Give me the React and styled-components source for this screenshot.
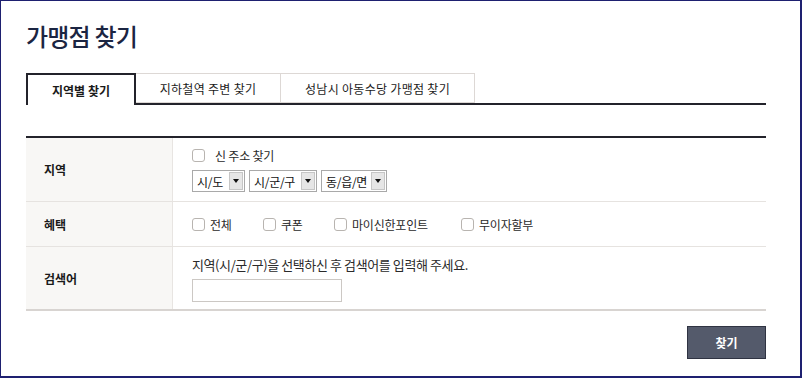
import styled, { createGlobalStyle } from 'styled-components';

const GlobalStyle = createGlobalStyle`
  html, body {
    margin: 0;
    padding: 0;
    background: #fff;
  }
  body {
    font-family: 'Noto Sans CJK KR', 'Noto Sans', sans-serif;
    color: #222;
  }
`;

const Frame = styled.div`
  box-sizing: border-box;
  width: 802px;
  height: 378px;
  border: 1px solid #1e2070;
  border-right-width: 2px;
  border-bottom-width: 2px;
  padding: 0 0 0 25px;
  overflow: hidden;
`;

const Inner = styled.div`
  width: 740px;
`;

const Title = styled.h1`
  margin: 0;
  padding-top: 19px;
  height: 72px;
  box-sizing: border-box;
  font-size: 24px;
  font-weight: 500;
  letter-spacing: -0.8px;
  color: #1b2542;
  line-height: 32px;
`;

const TabBar = styled.div`
  display: flex;
  height: 32px;
  border-bottom: 2px solid #23232b;
  box-sizing: border-box;
`;

const Tab = styled.div`
  box-sizing: border-box;
  height: ${(p) => (p.$active ? '32px' : '30px')};
  padding: 0 20px;
  width: ${(p) => p.$width}px;
  display: flex;
  align-items: center;
  justify-content: center;
  font-size: 12px;
  letter-spacing: ${(p) => (p.$active ? '0' : '0.3px')};
  font-weight: ${(p) => (p.$active ? 700 : 400)};
  color: #1a1a1a;
  background: #fff;
  border: ${(p) => (p.$active ? '2px solid #23232b' : '1px solid #ddd8d5')};
  border-bottom: ${(p) => (p.$active ? '0' : '1px solid #ddd8d5')};
  border-left: ${(p) => (p.$first || p.$active ? '' : '0')};
  margin-bottom: ${(p) => (p.$active ? '-2px' : '0')};
  position: relative;
`;

const Table = styled.div`
  margin-top: 31px;
  border-top: 2px solid #23232b;
  border-bottom: 2px solid #d8d4d1;
`;

const Row = styled.div`
  display: flex;
  height: ${(p) => p.$h}px;
  & + & {
    border-top: 1px solid #e6e3e0;
  }
`;

const Label = styled.div`
  width: 147px;
  flex: none;
  box-sizing: border-box;
  background: #f8f7f5;
  border-right: 1px solid #e8e5e2;
  padding-left: 18px;
  display: flex;
  align-items: center;
  font-size: 12px;
  font-weight: 700;
  color: #1a1a1a;
`;

const Cell = styled.div`
  flex: 1;
  padding-left: 19px;
  display: flex;
  flex-direction: column;
  justify-content: center;
  gap: ${(p) => p.$gap ?? 0}px;
  font-size: 12px;
  color: #333;
`;

const Line = styled.div`
  display: flex;
  align-items: center;
  gap: ${(p) => p.$gap ?? 4}px;
`;

const CheckLabel = styled.label`
  display: flex;
  align-items: center;
  gap: ${(p) => p.$gap ?? 5}px;
  width: ${(p) => (p.$width ? `${p.$width}px` : 'auto')};
  font-size: 12px;
  color: #2a2a2a;
  letter-spacing: -0.2px;
`;

const Box = styled.span`
  display: inline-block;
  width: 11px;
  height: 11px;
  border: 1px solid #b8b4b0;
  border-radius: 3px;
  background: #fff;
`;

const Select = styled.div`
  box-sizing: border-box;
  height: 22px;
  width: ${(p) => p.$width}px;
  border: 1px solid #a9a9a9;
  display: flex;
  align-items: stretch;
  font-size: 12px;
  color: #111;
`;

const SelectText = styled.span`
  flex: 1;
  display: flex;
  align-items: center;
  padding-left: 4px;
  letter-spacing: -0.3px;
`;

const Arrow = styled.span`
  width: 14px;
  margin: 1px;
  background: #e6e6e6;
  border: 1px solid #c6c6c6;
  box-sizing: border-box;
  display: flex;
  align-items: center;
  justify-content: center;
  &::after {
    content: '';
    border-left: 3px solid transparent;
    border-right: 3px solid transparent;
    border-top: 4px solid #111;
  }
`;

const Guide = styled.div`
  font-size: 13px;
  color: #2a2a2a;
  letter-spacing: -0.4px;
`;

const Input = styled.div`
  box-sizing: border-box;
  width: 150px;
  height: 23px;
  border: 1px solid #ccc8c4;
  background: #fff;
`;

const Footer = styled.div`
  display: flex;
  justify-content: flex-end;
  padding-top: 15px;
`;

const Button = styled.button`
  width: 79px;
  height: 33px;
  background: #545a6b;
  border: 1px solid #2f3342;
  color: #fff;
  font-family: inherit;
  font-size: 12px;
  font-weight: 700;
`;

function Check({ label, width }) {
  return (
    <CheckLabel $width={width}>
      <Box />
      {label}
    </CheckLabel>
  );
}

function Dropdown({ label, width }) {
  return (
    <Select $width={width}>
      <SelectText>{label}</SelectText>
      <Arrow />
    </Select>
  );
}

export default function App() {
  return (
    <Frame>
      <GlobalStyle />
      <Inner>
        <Title>가맹점 찾기</Title>
        <TabBar>
          <Tab $active $first $width={110}>지역별 찾기</Tab>
          <Tab $width={145}>지하철역 주변 찾기</Tab>
          <Tab $width={194}>성남시 아동수당 가맹점 찾기</Tab>
        </TabBar>
        <Table>
          <Row $h={63}>
            <Label>지역</Label>
            <Cell $gap={6}>
              <CheckLabel $gap={10}>
                <Box />
                신 주소 찾기
              </CheckLabel>
              <Line>
                <Dropdown label="시/도" width={53} />
                <Dropdown label="시/군/구" width={68} />
                <Dropdown label="동/읍/면" width={66} />
              </Line>
            </Cell>
          </Row>
          <Row $h={44}>
            <Label>혜택</Label>
            <Cell>
              <Line $gap={0}>
                <Check label="전체" width={71} />
                <Check label="쿠폰" width={71} />
                <Check label="마이신한포인트" width={127} />
                <Check label="무이자할부" />
              </Line>
            </Cell>
          </Row>
          <Row $h={62}>
            <Label>검색어</Label>
            <Cell $gap={5}>
              <Guide>지역(시/군/구)을 선택하신 후 검색어를 입력해 주세요.</Guide>
              <Input />
            </Cell>
          </Row>
        </Table>
        <Footer>
          <Button>찾기</Button>
        </Footer>
      </Inner>
    </Frame>
  );
}
